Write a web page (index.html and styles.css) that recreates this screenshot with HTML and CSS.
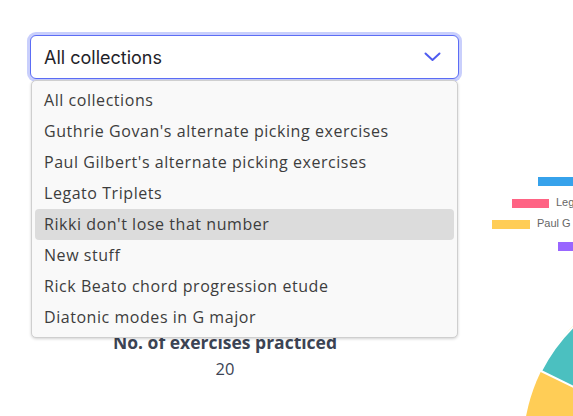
FILE: index.html
```html
<!DOCTYPE html>
<html>
<head>
<meta charset="utf-8">
<link rel="stylesheet" href="styles.css">
</head>
<body>
<div class="page">
  <div class="left">
    <div class="select-wrap">
      <div class="select">
        <span class="select-value">All collections</span>
        <svg class="chevron" width="17" height="10" viewBox="0 0 17 10"><path d="M1.5 1.5 L8.5 8 L15.5 1.5" fill="none" stroke="#4f5cf0" stroke-width="2" stroke-linecap="round" stroke-linejoin="round"/></svg>
      </div>
      <ul class="menu">
        <li class="opt">All collections</li>
        <li class="opt">Guthrie Govan's alternate picking exercises</li>
        <li class="opt">Paul Gilbert's alternate picking exercises</li>
        <li class="opt">Legato Triplets</li>
        <li class="opt active">Rikki don't lose that number</li>
        <li class="opt">New stuff</li>
        <li class="opt">Rick Beato chord progression etude</li>
        <li class="opt">Diatonic modes in G major</li>
      </ul>
    </div>
    <div class="stat">
      <div class="stat-title">No. of exercises practiced</div>
      <div class="stat-value">20</div>
    </div>
  </div>
  <div class="chart">
    <span class="bar blue" style="left:78px;top:177px;width:40px"></span>
    <span class="bar pink" style="left:52px;top:199px;width:37px"></span>
    <span class="lbl" style="left:96px;top:195px">Leg</span>
    <span class="bar yellow" style="left:32px;top:220px;width:38px"></span>
    <span class="lbl" style="left:77px;top:216px">Paul G</span>
    <span class="bar purple" style="left:98px;top:242px;width:20px"></span>
    <svg class="pie" width="113" height="416" viewBox="460 0 113 416">
      <circle cx="700" cy="449" r="177" fill="#ffcd56"/>
      <path d="M700 449 L 541 371 A 177 177 0 0 1 600 305 Z" fill="#4bc0c0" stroke="#fff" stroke-width="2"/>
      <path d="M700 449 L 600 305 A 177 177 0 0 1 700 272 Z" fill="#4bc0c0"/>
    </svg>
  </div>
</div>
</body>
</html>
```

FILE: styles.css
```css
* { box-sizing: border-box; }
html, body { margin: 0; padding: 0; background: #fff; }
body { width: 573px; height: 416px; overflow: hidden; }
.page { display: flex; width: 573px; height: 416px; }
.left { width: 460px; flex: none; padding: 35px 0 0 30px; position: relative; z-index: 2; }
.select-wrap { position: relative; width: 429px; }
.select {
  height: 44px;
  border: 1px solid #5c6df5;
  border-radius: 6px;
  box-shadow: 0 0 0 3px #c9cffc;
  background: #fff;
  display: flex;
  align-items: center;
  justify-content: space-between;
  padding: 0 17px 0 13px;
  font-family: Inter, "Liberation Sans", sans-serif;
  font-size: 18px;
  color: #1f2329;
}
.chevron { display: block; }
.menu {
  position: absolute;
  left: 1px; top: 45px;
  width: 427px;
  margin: 0;
  list-style: none;
  padding: 4px 3px;
  background: #f9f9f9;
  border: 1px solid #cfcfcf;
  border-radius: 5px;
  box-shadow: 0 1px 3px rgba(0,0,0,0.18);
}
.opt {
  height: 31px;
  line-height: 31px;
  padding-left: 9px;
  border-radius: 4px;
  font-family: "Open Sans", sans-serif;
  font-size: 16px;
  letter-spacing: 0.55px;
  color: #3d3d3d;
  white-space: nowrap;
}
.opt.active { background: #dcdcdc; }
.stat { width: 390px; margin-top: 251px; text-align: center; font-family: "Open Sans", sans-serif; color: #3c4454; }
.stat-title { font-weight: 700; font-size: 17.5px; line-height: 24px; }
.stat-value { font-size: 16.5px; line-height: 24px; margin-top: 3px; }
.chart { position: relative; flex: 1; height: 416px; }
.bar { position: absolute; height: 9px; }
.blue { background: #36a2eb; }
.pink { background: #ff6384; }
.yellow { background: #ffcd56; }
.purple { background: #9966ff; }
.lbl { position: absolute; font-family: "Liberation Sans", Arial, sans-serif; font-size: 11px; color: #666; white-space: nowrap; line-height: 14px; }
.pie { position: absolute; left: 0; top: 0; }
```
